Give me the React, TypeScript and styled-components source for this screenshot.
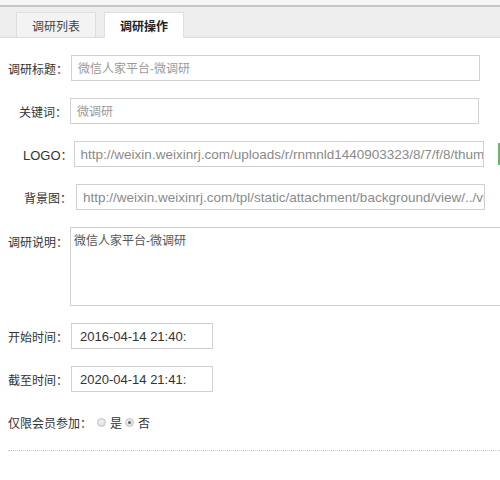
import React from "react";
import styled, { createGlobalStyle } from "styled-components";

const Global = createGlobalStyle`
  html, body { margin: 0; padding: 0; background: #fff; }
  body {
    font-family: "Liberation Sans", "Noto Sans CJK SC", sans-serif;
    color: #333;
    overflow: hidden;
    width: 500px;
  }
`;

const Page = styled.div`
  width: 500px;
  overflow: hidden;
`;

const TopStrip = styled.div`
  height: 5px;
  background: #f6f6f6;
  border-bottom: 2px solid #c6c6c6;
`;

const TabBar = styled.div`
  display: flex;
  align-items: flex-end;
  gap: 8px;
  height: 30px;
  padding-left: 16px;
  background: linear-gradient(#eeeeee 0%, #eeeeee 88%, #e9e9e9 100%);
  border-bottom: 1px solid #dcdcdc;
`;

const Tab = styled.div<{ $active?: boolean }>`
  width: 80px;
  box-sizing: border-box;
  display: flex;
  align-items: center;
  justify-content: center;
  font-size: 12px;
  border: 1px solid ${(p) => (p.$active ? "#e0e0e0" : "#dedede")};
  border-bottom: none;
  background: ${(p) => (p.$active ? "#fff" : "#f3f3f3")};
  color: ${(p) => (p.$active ? "#222" : "#444")};
  font-weight: ${(p) => (p.$active ? "bold" : "normal")};
  margin-bottom: ${(p) => (p.$active ? "-1px" : "0")};
  height: ${(p) => (p.$active ? 26 : 25)}px;
`;

const Form = styled.div`
  display: flex;
  flex-direction: column;
  gap: 17px;
  padding: 17px 0 0 8px;
`;

const Row = styled.div<{ $top?: boolean }>`
  display: flex;
  align-items: ${(p) => (p.$top ? "flex-start" : "center")};
  min-height: 26px;
  white-space: nowrap;
`;

const Label = styled.label<{ $indent?: number; $gap?: number; $top?: number }>`
  font-size: 12px;
  color: #333;
  padding-left: ${(p) => p.$indent ?? 0}px;
  margin-right: ${(p) => p.$gap ?? 3}px;
  padding-top: ${(p) => p.$top ?? 0}px;
  flex-shrink: 0;
`;

const LatinLabel = styled.span`
  font-size: 13px;
`;

const TextInput = styled.input<{ $w: number; $pad?: number; $dark?: boolean; $size?: number }>`
  box-sizing: border-box;
  width: ${(p) => p.$w}px;
  height: 26px;
  flex-shrink: 0;
  margin: 0;
  padding: 0 0 0 ${(p) => p.$pad ?? 6}px;
  border: 1px solid #d0d0d0;
  border-radius: 0;
  background: #fff;
  font-family: "Liberation Sans", "Noto Sans CJK SC", sans-serif;
  font-size: ${(p) => p.$size ?? 13}px;
  color: ${(p) => (p.$dark ? "#333" : "#8a8a8a")};
  outline: none;
  &::placeholder {
    color: #9a9a9a;
    font-size: 12px;
  }
`;

const TextArea = styled.textarea`
  box-sizing: border-box;
  width: 440px;
  height: 79px;
  flex-shrink: 0;
  margin: 0;
  padding: 5px 3px;
  border: 1px solid #d0d0d0;
  border-radius: 0;
  resize: none;
  font-family: "Liberation Sans", "Noto Sans CJK SC", sans-serif;
  font-size: 12px;
  line-height: 16px;
  color: #555;
  outline: none;
`;

const UploadButton = styled.span`
  display: block;
  flex-shrink: 0;
  margin-left: 14px;
  width: 60px;
  height: 22px;
  box-sizing: border-box;
  border: 1px solid #64bb64;
  border-left-width: 2px;
  background: #f4fbf4;
`;

const RadioGroup = styled.div`
  display: flex;
  align-items: center;
  gap: 3px;
  font-size: 12px;
  color: #333;
`;

const RadioOption = styled.label`
  display: flex;
  align-items: center;
  gap: 4px;
`;

const Radio = styled.input`
  appearance: none;
  -webkit-appearance: none;
  margin: 0;
  width: 9px;
  height: 9px;
  border-radius: 50%;
  border: 1px solid #c4c4c4;
  background: radial-gradient(circle at 40% 35%, #f2f2f2, #d6d6d6);
  box-sizing: border-box;
  position: relative;
  &:checked::after {
    content: "";
    position: absolute;
    left: 2px;
    top: 2px;
    width: 3px;
    height: 3px;
    border-radius: 50%;
    background: #666;
  }
`;

const Divider = styled.div`
  margin: -2px 0 0 0;
  border-top: 1px dotted #c8c8c8;
`;

export default function App() {
  return (
    <Page>
      <Global />
      <TopStrip />
      <TabBar>
        <Tab>调研列表</Tab>
        <Tab $active>调研操作</Tab>
      </TabBar>
      <Form>
        <Row>
          <Label>调研标题：</Label>
          <TextInput $w={409} placeholder="微信人家平台-微调研" readOnly />
        </Row>
        <Row>
          <Label $indent={11}>关键词：</Label>
          <TextInput $w={409} placeholder="微调研" readOnly />
        </Row>
        <Row>
          <Label $indent={15} $gap={1}>
            <LatinLabel>LOGO</LatinLabel>：
          </Label>
          <TextInput
            $w={410}
            $size={13.5}
            defaultValue="http://weixin.weixinrj.com/uploads/r/rnmnld1440903323/8/7/f/8/thumb_55e2f1a2b3c4d.jpg"
            readOnly
          />
          <UploadButton role="button" aria-label="上传" />
        </Row>
        <Row>
          <Label $indent={16} $gap={4}>背景图：</Label>
          <TextInput
            $w={409}
            $size={13.5}
            defaultValue="http://weixin.weixinrj.com/tpl/static/attachment/background/view/../view/bg.jpg"
            readOnly
          />
        </Row>
        <Row $top>
          <Label $top={6} $gap={2}>调研说明：</Label>
          <TextArea defaultValue="微信人家平台-微调研" readOnly />
        </Row>
        <Row>
          <Label>开始时间：</Label>
          <TextInput $w={142} $pad={8} $dark defaultValue="2016-04-14 21:40:" readOnly />
        </Row>
        <Row>
          <Label>截至时间：</Label>
          <TextInput $w={142} $pad={8} $dark defaultValue="2020-04-14 21:41:" readOnly />
        </Row>
        <Row>
          <Label $gap={5}>仅限会员参加：</Label>
          <RadioGroup>
            <RadioOption>
              <Radio type="radio" name="member" />是
            </RadioOption>
            <RadioOption>
              <Radio type="radio" name="member" defaultChecked />否
            </RadioOption>
          </RadioGroup>
        </Row>
        <Divider />
      </Form>
    </Page>
  );
}
